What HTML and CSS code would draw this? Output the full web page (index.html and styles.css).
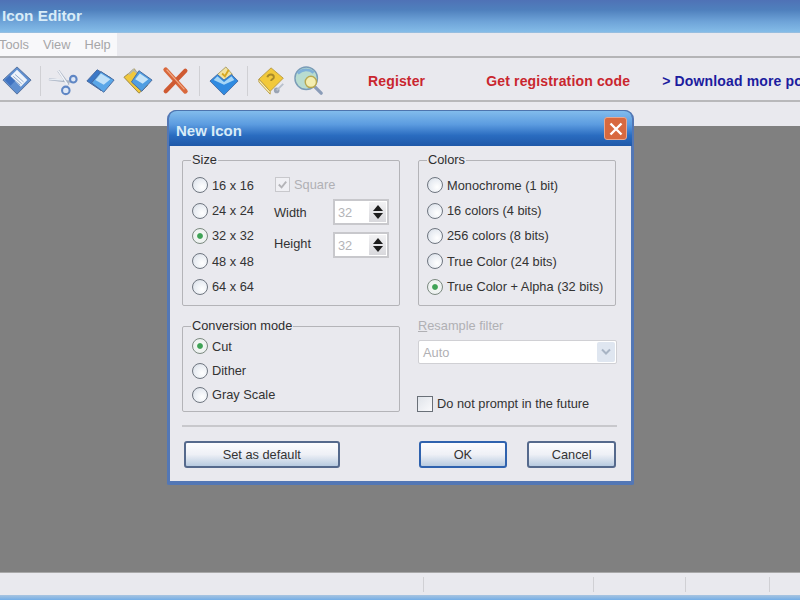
FILE: index.html
```html
<!DOCTYPE html>
<html lang="en">
<head>
    <meta charset="UTF-8">
    <meta name="viewport" content="width=device-width, initial-scale=1.0">
    <title>Icon Editor</title>
    <link rel="stylesheet" href="styles.css">
</head>
<body>
    <div class="app">
        <div class="titlebar">Icon Editor</div>
        <div class="menubar">
            <div class="menu">
                <span class="menu-tools">Tools</span>
                <span>View</span>
                <span>Help</span>
            </div>
        </div>
        <div class="toolbar">
            <svg class="tool" viewBox="0 0 32 32">
                <polygon points="16,1 31,15 16,30 1,15" fill="#5f8fd0" stroke="#54709c"/>
                <polygon points="16,4 27,15 20,22 9,11" fill="#eef3fa"/>
                <path d="M14 9l9 8M12 11l9 8M10.500 12.500l9 8" stroke="#8ea6c8" stroke-width="1"/>
                <polygon points="3,15 8,10 14,16 9,21" fill="#3f72c0"/>
            </svg>
            <span class="tool-sep"></span>
            <svg class="tool tool-cut" viewBox="0 0 32 32">
                <path d="M11 5l11 15M1 14l24 3" stroke="#a9b4c4" stroke-width="2.500" fill="none"/>
                <path d="M1 14l15 1" stroke="#e8edf4" stroke-width="1.500"/>
                <path d="M11 5l10 15" stroke="#f4f6fa" stroke-width="1.500"/>
                <circle cx="27" cy="14" r="3.500" fill="#dfe8f6" stroke="#5f86c4" stroke-width="2.200"/>
                <circle cx="19" cy="26" r="4" fill="#dfe8f6" stroke="#5f86c4" stroke-width="2.200"/>
            </svg>
            <svg class="tool" viewBox="0 0 32 32">
                <polygon points="13,4 28,13 17,26 2,16" fill="#3a78c8" stroke="#46689c"/>
                <polygon points="17,6 31,15 20,28 7,18" fill="#59a6e8" stroke="#46689c"/>
                <polygon points="17,8 27,14 20,20 11,15" fill="#bfe0f8"/>
            </svg>
            <svg class="tool tool-paste" viewBox="0 0 32 32">
                <polygon points="1,12 12,3 26,21 17,29" fill="#f0c83c" stroke="#9a8440"/>
                <path d="M6 9l5-5 5 4" fill="none" stroke="#b8b8a8" stroke-width="2"/>
                <polygon points="17,5 31,15 20,27 9,17" fill="#4f9ee2" stroke="#46689c"/>
                <polygon points="18,8 27,14 21,19 13,14" fill="#c6e4f8"/>
            </svg>
            <svg class="tool tool-x" viewBox="0 0 32 32">
                <path d="M5 4l21 23" stroke="#d9683c" stroke-width="5" stroke-linecap="round"/>
                <path d="M26 5L5 27" stroke="#cf5a32" stroke-width="4.500" stroke-linecap="round"/>
                <path d="M6 4l19 21" stroke="#f0a884" stroke-width="1.200"/>
            </svg>
            <span class="tool-sep sep-wide"></span>
            <svg class="tool" viewBox="0 0 32 32">
                <polygon points="9,9 18,1 25,9 16,17" fill="#f2e2a0" stroke="#a89a60"/>
                <path d="M14 8l3 3 4-7" fill="none" stroke="#d8a820" stroke-width="2"/>
                <polygon points="1,16 9,9 16,15 24,9 31,16 16,31" fill="#2f8ae0" stroke="#4a70a8"/>
                <polygon points="9,11 16,17 24,11 27,15 16,20 5,15" fill="#a6d6f6"/>
            </svg>
            <span class="tool-sep"></span>
            <svg class="tool tool-book" viewBox="0 0 32 32">
                <polygon points="15,2 28,13 14,27 2,14" fill="#f2c93a" stroke="#b89a40"/>
                <polygon points="2,14 14,27 14,30 2,17" fill="#fbf0b4" stroke="#b89a40"/>
                <path d="M11 12c1-4 7-4 7 0 0 2-3 2-3 4" fill="none" stroke="#a88a28" stroke-width="2"/>
                <circle cx="21" cy="26" r="3" fill="#9aa4b4"/>
                <path d="M21 26l7-7" stroke="#b8c0cc" stroke-width="2"/>
            </svg>
            <svg class="tool" viewBox="0 0 32 32">
                <circle cx="13" cy="13" r="12" fill="#b8dcd0" stroke="#7a9cb8" stroke-width="1.500"/>
                <path d="M4 8c5-5 12-5 17-1" stroke="#7fb0d8" stroke-width="3" fill="none"/>
                <path d="M22 22l7 7" stroke="#8a9cb8" stroke-width="3.500" stroke-linecap="round"/>
                <circle cx="18" cy="17" r="6" fill="#f4eeb0" stroke="#b8a850" stroke-width="1.500"/>
            </svg>
            <a class="link link-register">Register</a>
            <a class="link link-code">Get registration code</a>
            <a class="link link-more">&gt; Download more po</a>
        </div>
        <div class="strip"></div>
        <div class="workspace"></div>
        <div class="statusbar">
            <span class="cell cell-main"></span>
            <span class="cell cell-a"></span>
            <span class="cell cell-b"></span>
            <span class="cell cell-c"></span>
        </div>
        <div class="taskbar"></div>
    </div>

    <div class="dialog">
        <div class="dialog-title">
            <span class="dialog-name">New Icon</span>
            <span class="close">
                <svg viewBox="0 0 16 16"><path d="M2.500 2.500l11 11M13.500 2.500l-11 11" stroke="#fff" stroke-width="2.400"/></svg>
            </span>
        </div>
        <div class="dialog-body">
            <div class="groups">
                <fieldset class="group group-top group-size">
                    <legend>Size</legend>
                    <div class="size-grid">
                        <div class="radio-list size-list">
                            <div class="row"><i class="radio"></i>16 x 16</div>
                            <div class="row"><i class="radio"></i>24 x 24</div>
                            <div class="row"><i class="radio on"></i>32 x 32</div>
                            <div class="row"><i class="radio"></i>48 x 48</div>
                            <div class="row"><i class="radio"></i>64 x 64</div>
                        </div>
                        <div class="size-fields">
                            <div class="square">
                                <i class="check">
                                    <svg viewBox="0 0 14 14"><path d="M3 7l3 3 5-6" fill="none" stroke="#b4b4b8" stroke-width="2"/></svg>
                                </i>
                                Square
                            </div>
                            <div class="spin-row spin-width">
                                <span>Width</span>
                                <div class="spin">32<span class="spin-btns"><b class="up"></b><b class="down"></b></span></div>
                            </div>
                            <div class="spin-row spin-height">
                                <span class="spin-label">Height</span>
                                <div class="spin">32<span class="spin-btns"><b class="up"></b><b class="down"></b></span></div>
                            </div>
                        </div>
                    </div>
                </fieldset>
                <fieldset class="group group-top group-colors">
                    <legend>Colors</legend>
                    <div class="radio-list">
                        <div class="row"><i class="radio"></i>Monochrome (1 bit)</div>
                        <div class="row"><i class="radio"></i>16 colors (4 bits)</div>
                        <div class="row"><i class="radio"></i>256 colors (8 bits)</div>
                        <div class="row"><i class="radio"></i>True Color (24 bits)</div>
                        <div class="row"><i class="radio on"></i>True Color + Alpha (32 bits)</div>
                    </div>
                </fieldset>
                <fieldset class="group group-mode">
                    <legend>Conversion mode</legend>
                    <div class="radio-list mode-list">
                        <div class="row"><i class="radio on"></i>Cut</div>
                        <div class="row"><i class="radio"></i>Dither</div>
                        <div class="row"><i class="radio"></i>Gray Scale</div>
                    </div>
                </fieldset>
                <div class="resample">
                    <div class="resample-label"><u>R</u>esample filter</div>
                    <div class="select">
                        Auto
                        <span class="select-btn">
                            <svg viewBox="0 0 12 8"><path d="M2 1.500l4 4 4-4" fill="none" stroke="#a8b4c4" stroke-width="2"/></svg>
                        </span>
                    </div>
                    <div class="prompt"><i class="check prompt-check"></i>Do not prompt in the future</div>
                </div>
            </div>
            <div class="separator"></div>
            <div class="buttons">
                <button class="btn btn-default">Set as default</button>
                <button class="btn btn-ok">OK</button>
                <button class="btn btn-cancel">Cancel</button>
            </div>
        </div>
    </div>
</body>
</html>
```

FILE: styles.css
```css
* { box-sizing: border-box; }
html, body { margin: 0; padding: 0; height: 100%; overflow: hidden; }
body { font-family: "Liberation Sans", Arial, sans-serif; font-size: 12.800px; color: #333; background: #808080; }

.app { display: flex; flex-direction: column; height: 600px; width: 800px; overflow: hidden; }

.titlebar { height: 33px; padding: 7px 0 0 2px; font-size: 15.300px; font-weight: bold; color: #d8ecf8; background: linear-gradient(#4f72b6 0, #4f80bd 30%, #6ea3d8 65%, #84bce8 97%, #a8c0d8 100%); }

.menubar { height: 25px; background: #e9e9ee; border-bottom: 2px solid #b4b4b6; }
.menu { display: flex; gap: 14px; width: 117px; height: 23px; padding-top: 4px; background: #f8f8fa; color: #a6a6a8; font-size: 12.800px; }
.menu-tools { margin-left: -1px; }

.toolbar { display: flex; align-items: center; height: 44px; background: #e9e9ee; border-bottom: 2px solid #b8b8ba; padding: 4px 0 0 2px; white-space: nowrap; overflow: hidden; }
.tool { width: 30px; height: 30px; margin-right: 7px; flex: none; filter: blur(0.300px); }
.tool-cut { margin-left: -1px; }
.tool-paste { margin-left: 1px; }
.tool-x { margin-left: 1px; margin-right: 7px; }
.tool-book { margin-left: 1px; }
.tool-sep { width: 1px; height: 30px; background: #d0d0d4; margin: 0 8px 0 1px; flex: none; }
.sep-wide { margin: 0 9px 0 1px; }
.link { font-weight: bold; font-size: 14px; letter-spacing: 0.150px; flex: none; }
.link-register { margin-left: 37px; color: #c9262e; }
.link-code { margin-left: 61px; color: #c9262e; }
.link-more { margin-left: 32px; color: #1c1c9e; }

.strip { height: 24px; background: #e9e9ee; }
.workspace { flex: 1; background: #808080; }
.statusbar { display: flex; height: 23px; background: #e9e9ee; border-top: 1px solid #a8a8a8; padding-top: 4px; }
.cell { border-right: 1px solid #d0d0d4; height: 15px; flex: none; }
.cell-main { width: 424px; }
.cell-a { width: 170px; }
.cell-b { width: 92px; }
.cell-c { width: 84px; }
.taskbar { height: 5px; background: linear-gradient(#a8c4e0, #74aee6); }

.dialog { position: absolute; left: 167px; top: 110px; width: 467px; height: 375px; display: flex; flex-direction: column; background: #5377b5; border: 2px solid #5377b5; border-top: 0; border-radius: 9px 9px 2px 2px; }
.dialog-title { display: flex; justify-content: space-between; align-items: center; height: 36px; padding: 0 5px 0 7px; color: #d8ecf8; font-size: 15px; font-weight: bold; background: linear-gradient(#82bcec 0, #5c9ce0 38%, #2a6cc0 70%, #1f58a8 100%); border-radius: 8px 8px 0 0; border-top: 1px solid #4d74ae; }
.dialog-name { padding-top: 3px; }
.close { display: flex; align-items: center; justify-content: center; width: 23px; height: 23px; background: #d8693f; border: 1px solid #e8a890; border-radius: 3px; }
.close svg { width: 16px; height: 16px; }

.dialog-body { flex: 1; background: #e9e9ee; margin: 0 1px 2px; padding: 7px 15px 0 12px; }
.groups { display: grid; grid-template-columns: 218px 199px; column-gap: 18px; row-gap: 13px; }

.group { margin: 0; padding: 0 0 0 9px; border: 1px solid #b4b4b8; border-radius: 2px; min-width: 0; }
.group legend { padding: 0 1px; margin-left: -1px; line-height: 14px; font-size: 12.800px; color: #2e2e2e; }
.group-top { height: 153px; }
.group-mode { height: 93px; }
.group-colors { padding-left: 8px; margin-right: 1px; }
.group-colors legend { margin-left: 0; }

.radio-list { display: flex; flex-direction: column; gap: 7px; padding-top: 9px; }
.row { display: flex; align-items: center; gap: 4px; height: 18.400px; color: #333; white-space: nowrap; }
.mode-list { gap: 6px; padding-top: 4px; }
.radio { width: 16px; height: 16px; flex: none; border-radius: 50%; border: 1.500px solid #6f7680; background: radial-gradient(circle at 65% 65%, #fff 0, #e8ecf2 60%, #cdd3dc 100%); }
.radio.on { border-color: #7c8a80; background: radial-gradient(circle, #3fa356 0, #3fa356 24%, #f2f6f2 34%, #e8ecf0 100%); }

.size-grid { display: flex; }
.size-list { width: 83px; flex: none; }
.size-fields { padding-top: 8px; }
.square { display: flex; align-items: center; gap: 4px; height: 18px; color: #b0b0b4; }
.check { display: block; width: 15px; height: 15px; flex: none; border: 1px solid #c8c8cc; background: #f0f0f4; }
.check svg { display: block; width: 13px; height: 13px; }
.spin-row { display: flex; align-items: center; justify-content: space-between; width: 115px; height: 26px; margin-left: -1px; }
.spin-width { margin-top: 6px; }
.spin-height { margin-top: 7px; }
.spin-label { margin-bottom: 4px; }
.spin { position: relative; display: flex; align-items: center; width: 56px; height: 26px; padding-left: 3px; background: #fff; border: 2px solid #c8c8cc; color: #b4b4b8; }
.spin-btns { position: absolute; right: 1px; top: 1px; bottom: 1px; width: 17px; display: flex; flex-direction: column; justify-content: center; gap: 2px; align-items: center; background: linear-gradient(#f2f2f4, #d8d8dc); }
.spin-btns b { display: block; width: 0; height: 0; border-left: 5px solid transparent; border-right: 5px solid transparent; }
.spin-btns .up { border-bottom: 6px solid #1c1c1c; }
.spin-btns .down { border-top: 6px solid #1c1c1c; }

.resample-label { height: 21px; line-height: 14px; color: #b0b0b4; }
.select { position: relative; display: flex; align-items: center; width: 199px; height: 24px; padding-left: 4px; background: #fff; border: 1px solid #d0d0d4; color: #b0b0b4; border-radius: 2px; }
.select-btn { position: absolute; right: 1px; top: 1px; bottom: 1px; width: 18px; display: flex; align-items: center; justify-content: center; background: #dfe6f0; border-radius: 2px; }
.select-btn svg { width: 12px; height: 8px; }
.prompt { display: flex; align-items: center; gap: 4px; height: 17px; margin-top: 31px; margin-left: -1px; white-space: nowrap; color: #333; }
.prompt-check { width: 16px; height: 16px; border: 1.500px solid #6a7078; background: linear-gradient(135deg, #e0e4ea, #fafafc); }

.separator { height: 2px; margin-top: 13px; width: 435px; background: #c8c8cc; }

.buttons { display: flex; margin-top: 14px; padding-left: 2px; }
.btn { height: 27px; padding: 0; font: 12.800px "Liberation Sans", Arial, sans-serif; color: #333; border: 2px solid #55698c; border-radius: 3px; background: linear-gradient(#fcfcfe 0, #eef0f6 50%, #b8cbe0 100%); }
.btn-default { width: 156px; }
.btn-ok { width: 89px; margin-left: 79px; border-color: #2f62ae; }
.btn-cancel { width: 89px; margin-left: 20px; }
```
